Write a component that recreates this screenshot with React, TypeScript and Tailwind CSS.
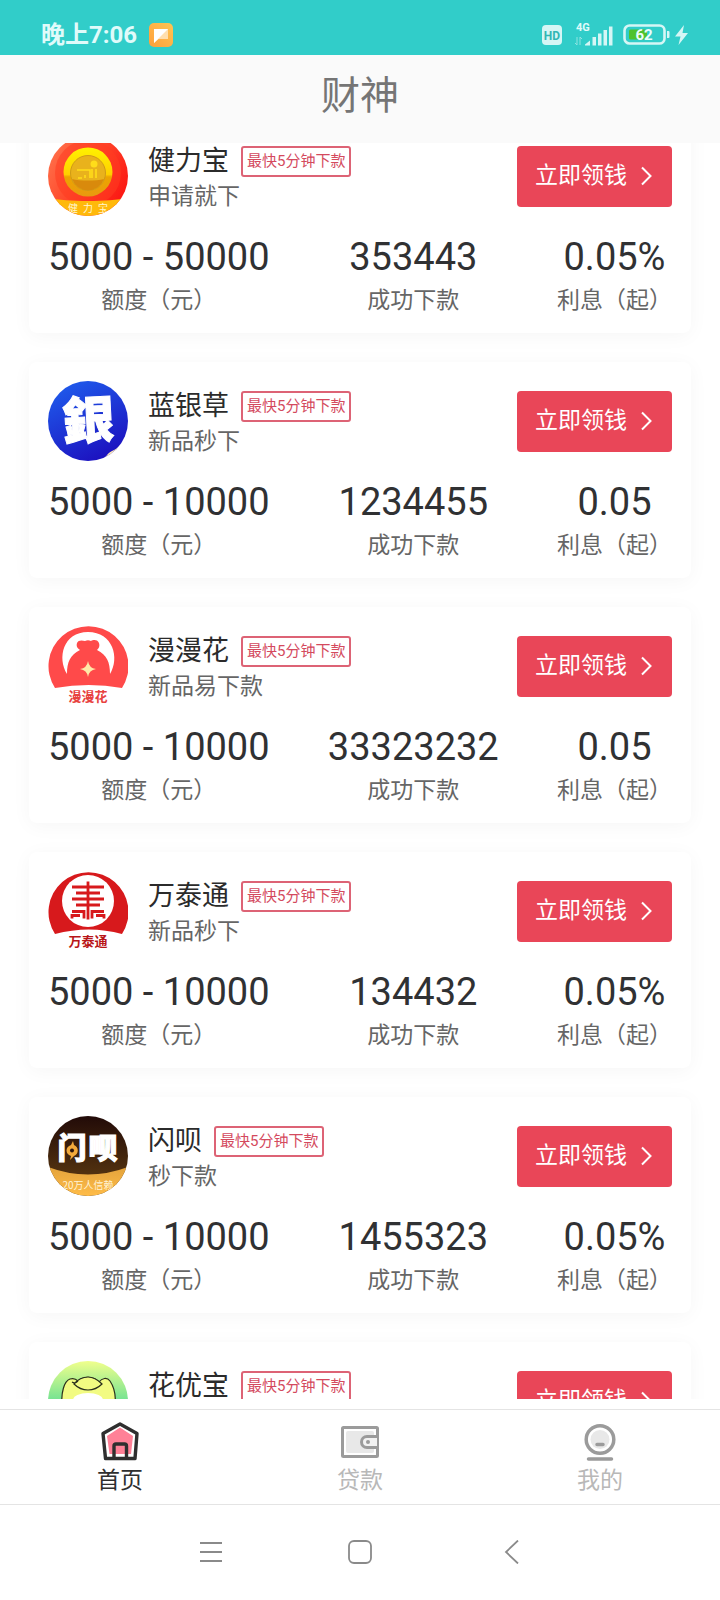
import type { ReactNode } from 'react';

interface Loan {
  id: string;
  name: string;
  slogan: string;
  amount: string;
  count: string;
  rate: string;
  logo: ReactNode;
}

const cjk = { fontFamily: '"Noto Sans CJK SC", sans-serif' };

/* ---------- Product logos (80 x 80) ---------- */

function JianLiBaoLogo() {
  return (
    <svg viewBox="0 0 80 80" className="h-20 w-20">
      <defs>
        <linearGradient id="jlb-bg" x1="0" y1="0" x2="1" y2="0.6">
          <stop offset="0" stopColor="#ff7a52" />
          <stop offset="0.5" stopColor="#ff4a2c" />
          <stop offset="1" stopColor="#fc1a14" />
        </linearGradient>
        <linearGradient id="jlb-coin" x1="0" y1="0" x2="0" y2="1">
          <stop offset="0" stopColor="#fff200" />
          <stop offset="0.55" stopColor="#ffd000" />
          <stop offset="0.6" stopColor="#eda400" />
          <stop offset="1" stopColor="#e89a10" />
        </linearGradient>
        <clipPath id="jlb-clip">
          <circle cx="40" cy="40" r="40" />
        </clipPath>
      </defs>
      <g clipPath="url(#jlb-clip)">
        <rect width="80" height="80" fill="url(#jlb-bg)" />
        <circle cx="40" cy="37" r="33" fill="#ff3d20" opacity="0.55" />
        <circle cx="40" cy="36" r="24.5" fill="url(#jlb-coin)" />
        <circle cx="40" cy="37" r="17.5" fill="#e9b21c" stroke="#cf9a18" />
        <path d="M24 43a17 17 0 0 0 32 0c-8 2-24 2-32 0z" fill="#d98a0c" />
        <circle cx="46" cy="28" r="3.5" fill="#ffdd1a" />
        <path d="M29 34h13v8M44 33v9M48 33v9M30 42h4M37 42v-3" fill="none" stroke="#ffdd1a" strokeWidth="1.6" />
        <path d="M0 62c20 4 60 4 80 0v18H0z" fill="#ffb90a" />
        <g fill="#fff6cf" fontSize="10" textAnchor="middle" style={cjk}>
          <text x="25" y="76">健</text>
          <text x="40" y="76">力</text>
          <text x="55" y="76">宝</text>
        </g>
      </g>
    </svg>
  );
}

function YinLogo() {
  return (
    <svg viewBox="0 0 80 80" className="h-20 w-20">
      <defs>
        <linearGradient id="yin-bg" x1="0.2" y1="0" x2="0.7" y2="1">
          <stop offset="0" stopColor="#1f5cec" />
          <stop offset="1" stopColor="#1c0fbe" />
        </linearGradient>
        <clipPath id="yin-clip">
          <circle cx="40" cy="40" r="40" />
        </clipPath>
      </defs>
      <g clipPath="url(#yin-clip)">
        <rect width="80" height="80" fill="url(#yin-bg)" />
        <path d="M53 80c5-3 6-8 11-10 6-3 8-5 12-10l4 20z" fill="#fbe6b4" />
        <path d="M56 80c5-3 6-8 11-10 5-2 8-5 11-9v19z" fill="#fff" />
        <text
          x="40"
          y="58"
          fill="#fff"
          stroke="#fff"
          strokeWidth="1"
          fontSize="51"
          fontWeight="900"
          textAnchor="middle"
          transform="rotate(-3 40 40)"
          style={{ fontFamily: '"Noto Sans CJK TC", sans-serif' }}
        >
          銀
        </text>
      </g>
    </svg>
  );
}

function ManManHuaLogo() {
  return (
    <svg viewBox="0 0 80 80" className="h-20 w-20">
      <path d="M7 62a40 40 0 1 1 67 0q-33-6-67 0z" fill="#ff4a4a" />
      <path
        d="M19 48C9 32 15 6 40 6s32 26 22 42c0-12-3-19-13-24 2-2 3-4 2-7-2-4-6-3-8-2-2-1-4-1-6 0-3-1-7-1-8 2-1 3 0 5 3 7-10 5-13 12-13 24z"
        fill="#fff"
      />
      <path d="M40 35q1 7 8 8-7 1-8 8-1-7-8-8 7-1 8-8z" fill="#ffe9a8" />
      <text x="40" y="75" fill="#e8423f" fontSize="13" fontWeight="700" textAnchor="middle" style={cjk}>
        漫漫花
      </text>
    </svg>
  );
}

function WanTaiTongLogo() {
  return (
    <svg viewBox="0 0 80 80" className="h-20 w-20">
      <path d="M7 63a40 40 0 1 1 67 0q-33-9-67 0z" fill="#d7191c" />
      <circle cx="40" cy="30" r="26" fill="#fff" />
      <path
        d="M40 10.5v38M24 16h32M28 22h24M24 28h32M28 34h24M24 40.5h12v7M24 47.500v-3h8M56 47.500v-3h-8M56 40.500H44v7"
        fill="none"
        stroke="#d7191c"
        strokeWidth="2.8"
      />
      <text x="40" y="75" fill="#b81518" fontSize="13" fontWeight="700" textAnchor="middle" style={cjk}>
        万泰通
      </text>
    </svg>
  );
}

function ShanBeiLogo() {
  return (
    <svg viewBox="0 0 80 80" className="h-20 w-20">
      <defs>
        <linearGradient id="sb-bg" x1="0" y1="0" x2="0" y2="1">
          <stop offset="0" stopColor="#220b08" />
          <stop offset="0.7" stopColor="#50300f" />
        </linearGradient>
        <linearGradient id="sb-band" x1="0" y1="0" x2="0" y2="1">
          <stop offset="0" stopColor="#e3a33c" />
          <stop offset="1" stopColor="#ffbc48" />
        </linearGradient>
        <clipPath id="sb-clip">
          <circle cx="40" cy="40" r="40" />
        </clipPath>
      </defs>
      <g clipPath="url(#sb-clip)">
        <rect width="80" height="80" fill="url(#sb-bg)" />
        <path d="M0 51q40 15 80 0v29H0z" fill="url(#sb-band)" />
        <g fill="#fff" stroke="#fff" strokeWidth="1.2" fontSize="29" fontWeight="900" textAnchor="middle" style={cjk}>
          <text x="24" y="43">门</text>
          <text x="55" y="43">呗</text>
        </g>
        <path d="M25 25l1 4c5 2 5 9 0 11l-4 4 1-4c-6-2-6-9 0-11z" fill="#f2a93b" />
        <circle cx="24" cy="34.5" r="2" fill="#2d140a" />
        <text x="40" y="73" fill="#fff3d6" fontSize="10" textAnchor="middle" style={cjk}>
          20万人信赖
        </text>
      </g>
    </svg>
  );
}

function HuaYouBaoLogo() {
  return (
    <svg viewBox="0 0 80 80" className="h-20 w-20">
      <defs>
        <linearGradient id="hyb-bg" x1="0" y1="0" x2="0" y2="1">
          <stop offset="0" stopColor="#f0ff8c" />
          <stop offset="0.5" stopColor="#72e292" />
        </linearGradient>
      </defs>
      <circle cx="40" cy="40" r="40" fill="url(#hyb-bg)" />
      <path
        d="M14 44c-1-12 2-24 8-26 3-1 6 0 8 2 6-5 15-5 21 1 3-4 8-5 11-1 4 6 6 15 5 24z"
        fill="#f2fb82"
        stroke="#2a2f1c"
        strokeWidth="1.2"
      />
      <ellipse cx="40" cy="39" rx="15" ry="7" fill="#fff" />
      <path d="M24 21q3 2 6-1M26 23q6-7 14-7 7 0 14 7-6 6-14 6-8 0-14-6z" fill="#f2fb82" stroke="#2a2f1c" strokeWidth="1.2" />
    </svg>
  );
}

const LOANS: Loan[] = [
  { id: 'jlb', name: '健力宝', slogan: '申请就下', amount: '5000 - 50000', count: '353443', rate: '0.05%', logo: <JianLiBaoLogo /> },
  { id: 'lyc', name: '蓝银草', slogan: '新品秒下', amount: '5000 - 10000', count: '1234455', rate: '0.05', logo: <YinLogo /> },
  { id: 'mmh', name: '漫漫花', slogan: '新品易下款', amount: '5000 - 10000', count: '33323232', rate: '0.05', logo: <ManManHuaLogo /> },
  { id: 'wtt', name: '万泰通', slogan: '新品秒下', amount: '5000 - 10000', count: '134432', rate: '0.05%', logo: <WanTaiTongLogo /> },
  { id: 'sb', name: '闪呗', slogan: '秒下款', amount: '5000 - 10000', count: '1455323', rate: '0.05%', logo: <ShanBeiLogo /> },
  { id: 'hyb', name: '花优宝', slogan: '新品秒下', amount: '5000 - 10000', count: '1234455', rate: '0.05%', logo: <HuaYouBaoLogo /> },
];

/* ---------- Status bar ---------- */

function StatusBar() {
  return (
    <div className="flex h-[55px] shrink-0 items-end justify-between bg-[#31cdc9] pr-8 pb-2 pl-[41px] text-[#e0fbfa]">
      <div className="flex items-center gap-3">
        <span className="text-2xl leading-6 font-bold">晚上7:06</span>
        <svg viewBox="0 0 24 24" className="h-6 w-6">
          <defs>
            <linearGradient id="note-bg" x1="0" y1="1" x2="1" y2="0">
              <stop offset="0" stopColor="#ff9f3a" />
              <stop offset="1" stopColor="#ffc552" />
            </linearGradient>
          </defs>
          <rect width="24" height="24" rx="5" fill="url(#note-bg)" />
          <path d="M5 6h14v10H9.500L5 20z" fill="#ffdfae" />
          <path d="M5 6h14L5 20z" fill="#fff" />
        </svg>
      </div>

      <div className="flex h-6 items-center">
        <svg viewBox="0 0 20 20" className="mr-3 h-5 w-5">
          <rect width="20" height="20" rx="4" fill="#d5f6f5" />
          <text x="10" y="14.5" fontSize="12" fontWeight="700" fill="#31b6b3" textAnchor="middle" fontFamily="Roboto, sans-serif">
            HD
          </text>
        </svg>
        <svg viewBox="0 0 40 24" className="mr-[9px] h-6 w-10">
          <text x="2" y="8" fontSize="11" fontWeight="700" fill="#e0fbfa" fontFamily="Roboto, sans-serif">
            4G
          </text>
          <path d="M3 14v8l-2-2M6 22v-8l2 2" fill="none" stroke="#8fe4e1" />
          <path
            d="M11 22.500v-1l5-4v5zM18.500 14h3.500v8.500h-3.500zM24 10.500h3.500v12H24zM29.500 7h3.500v15.500h-3.500zM35 3.500h3.500v19H35z"
            fill="#d5f6f5"
          />
        </svg>
        <svg viewBox="0 0 48 22" className="mr-1 h-[22px] w-12">
          <rect x="1.5" y="1.5" width="40" height="18" rx="5" fill="none" stroke="#d5f6f5" strokeWidth="2.6" />
          <rect x="6" y="5.5" width="18" height="10" rx="1.5" fill="#4fc22f" />
          <path d="M44 7h1.500q1 0 1 1v5q0 1-1 1H44z" fill="#d5f6f5" />
          <text x="21" y="15.5" fontSize="15" fontWeight="700" fill="#eafdfc" textAnchor="middle" fontFamily="Roboto, sans-serif">
            62
          </text>
        </svg>
        <svg viewBox="0 0 13 20" className="h-5 w-[13px]">
          <path d="M9 0L0 11.500h5.500L3.500 20 13 8H7.500z" fill="#d5f6f5" />
        </svg>
      </div>
    </div>
  );
}

/* ---------- Loan card ---------- */

function Stat({ value, label }: { value: string; label: string }) {
  return (
    <div className="flex flex-col items-center">
      <dd className="text-[38px] leading-[44px] text-[#303133]">{value}</dd>
      <dt className="order-last mt-1 text-[23px] leading-9 text-[#666666]">{label}</dt>
    </div>
  );
}

function LoanCard({ loan }: { loan: Loan }) {
  return (
    <article className="h-[216px] shrink-0 rounded-lg bg-white p-[19px] shadow-[0_3px_20px_rgba(0,0,0,0.04)]">
      <div className="flex items-center">
        {loan.logo}
        <div className="ml-5 flex-1 pt-1.5">
          <div className="flex h-9 items-center gap-3">
            <h2 className="text-[27px] leading-9 text-[#2b2b2b]">{loan.name}</h2>
            <span className="rounded-[3px] border-2 border-[#dd6375] px-1 text-[15px] leading-[27px] text-[#d44a5e]">
              最快5分钟下款
            </span>
          </div>
          <p className="text-[23px] leading-9 text-[#666666]">{loan.slogan}</p>
        </div>
        <button
          type="button"
          className="flex h-[61px] items-center gap-3 rounded bg-[#e94658] px-[18px] text-[23px] text-white"
        >
          立即领钱
          <svg viewBox="0 0 15 20" className="h-5 w-[15px]">
            <path d="M3 1.500l8.500 8.500L3 18.500" fill="none" stroke="currentColor" strokeWidth="2" />
          </svg>
        </button>
      </div>
      <dl className="mt-[19px] flex justify-between">
        <Stat value={loan.amount} label="额度（元）" />
        <Stat value={loan.count} label="成功下款" />
        <Stat value={loan.rate} label="利息（起）" />
      </dl>
    </article>
  );
}

/* ---------- Tab bar ---------- */

const HomeIcon = () => (
  <svg viewBox="0 0 40 40" className="h-10 w-10">
    <path d="M20 6.500L33 15l-2 18H9.500L7 15z" fill="#ff8197" />
    <path d="M20 3l17 9.500L35 37.500H5.500L3 12.500z" fill="none" stroke="#2f2f2f" strokeWidth="3.4" strokeLinejoin="round" />
    <path d="M14 37V25q0-2 2-2h8.500q2 0 2 2v12" fill="none" stroke="#2f2f2f" strokeWidth="3.4" />
  </svg>
);

const WalletIcon = () => (
  <svg viewBox="0 0 40 40" className="h-10 w-10">
    <rect x="6" y="10" width="28" height="22" rx="2" fill="#e8e8e8" />
    <rect x="2.5" y="6.5" width="35" height="29" rx="1" fill="none" stroke="#9b9b9b" strokeWidth="3" />
    <path d="M37 15.500H27a5.500 5.500 0 0 0 0 11h10" fill="#f2f2f2" stroke="#9b9b9b" strokeWidth="3" />
    <circle cx="28" cy="21" r="2" fill="#9b9b9b" />
  </svg>
);

const MineIcon = () => (
  <svg viewBox="0 0 40 40" className="h-10 w-10">
    <circle cx="20" cy="18.5" r="9.5" fill="#e8e8e8" />
    <circle cx="20" cy="18.5" r="13.8" fill="none" stroke="#9b9b9b" strokeWidth="3.5" />
    <path d="M17 23.500h6M8.500 38h23" stroke="#9b9b9b" strokeWidth="3.5" strokeLinecap="round" />
  </svg>
);

const TABS = [
  { label: '首页', icon: <HomeIcon />, active: true },
  { label: '贷款', icon: <WalletIcon />, active: false },
  { label: '我的', icon: <MineIcon />, active: false },
];

export default function App() {
  return (
    <div className="flex h-screen flex-col overflow-hidden bg-white font-[Roboto,'Noto_Sans_CJK_SC',sans-serif]">
      <StatusBar />

      <header className="h-[88px] shrink-0 bg-[#fafafa] text-center">
        <h1 className="text-[39px] leading-[82px] text-[#757575]">财神</h1>
      </header>

      {/* Scrolled list */}
      <main className="min-h-0 flex-1 overflow-hidden px-[29px]">
        <div className="-mt-[26px] flex flex-col gap-[29px]">
          {LOANS.map((loan) => (
            <LoanCard key={loan.id} loan={loan} />
          ))}
        </div>
      </main>

      <nav className="mt-[10px] flex h-24 shrink-0 border-y border-[#e4e4e4]">
        {TABS.map((tab) => (
          <a
            key={tab.label}
            href="#"
            className={`flex flex-1 flex-col items-center pt-[11px] text-[23px] leading-10 ${
              tab.active ? 'text-[#2f2f2f]' : 'text-[#b8b8b8]'
            }`}
          >
            {tab.icon}
            {tab.label}
          </a>
        ))}
      </nav>

      {/* System navigation */}
      <div className="flex h-[95px] shrink-0 items-center justify-center pb-0.5 text-[#8a8a8a]">
        <button type="button" aria-label="菜单" className="flex w-[150px] justify-center">
          <svg viewBox="0 0 24 24" className="h-6 w-6">
            <path d="M2 3h22M2 12h22M2 21h22" stroke="currentColor" strokeWidth="1.8" />
          </svg>
        </button>
        <button type="button" aria-label="主页" className="flex w-[150px] justify-center">
          <svg viewBox="0 0 24 24" className="h-6 w-6">
            <rect x="1" y="1" width="22" height="22" rx="5" fill="none" stroke="currentColor" strokeWidth="1.8" />
          </svg>
        </button>
        <button type="button" aria-label="返回" className="flex w-[150px] justify-center">
          <svg viewBox="0 0 24 24" className="h-6 w-6">
            <path d="M20 0.500L8 12l12 11.500" fill="none" stroke="currentColor" strokeWidth="1.8" />
          </svg>
        </button>
      </div>
    </div>
  );
}
